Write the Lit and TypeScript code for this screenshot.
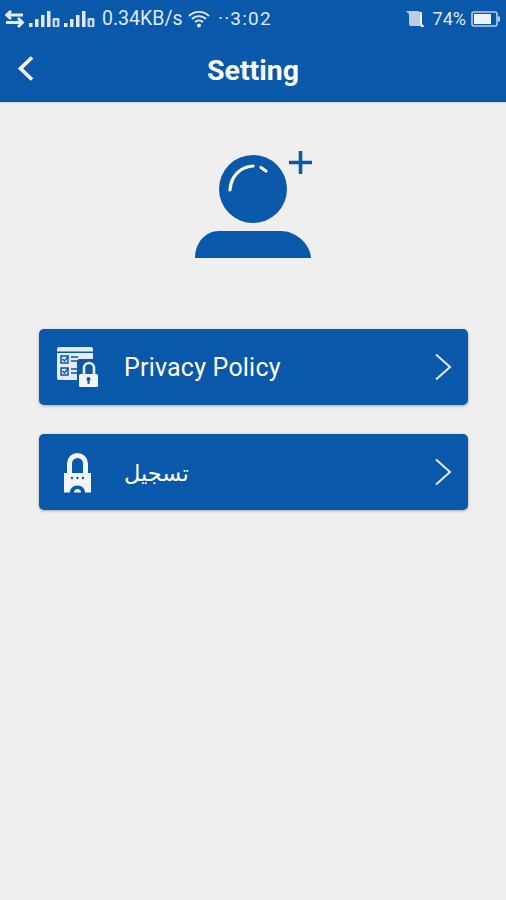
import { LitElement, html, css, svg } from 'lit';
import { customElement } from 'lit/decorators.js';

const signal = (sim: string) => svg`
  <rect x="0" y="13" width="3.500" height="4" fill="#dfe8f5"/>
  <rect x="6" y="9" width="3.500" height="8" fill="#dfe8f5"/>
  <rect x="12" y="5" width="3.500" height="12" fill="#dfe8f5"/>
  <rect x="18" y="1" width="3.500" height="16" fill="#dfe8f5"/>
  <rect x="23.500" y="8" width="7" height="9" rx="1" fill="#c5d5ea"/>
  <rect x="26" y="10.500" width="2" height="5" fill="#0a58aa"/>
  <title>${sim}</title>`;

@customElement('app-root')
export class AppRoot extends LitElement {
  static styles = css`
    :host {
      display: block;
      width: 506px;
      height: 900px;
      background: #efefef;
      font-family: Roboto, "Noto Sans", sans-serif;
      overflow: hidden;
    }
    .head {
      background: #0a58aa;
      height: 101px;
      border-bottom: 1px solid #094c94;
      box-shadow: 0 1px 1px #d5deea;
      color: #fff;
    }
    .status {
      height: 37px;
      display: flex;
      align-items: center;
      padding: 0 6px 0 5px;
      color: #dfe8f5;
      font-size: 18px;
      box-sizing: border-box;
    }
    .status svg { display: block; flex: none; }
    .speed { margin-left: 7px; width: 82px; white-space: nowrap; font-size: 19.500px; }
    .wifi { margin-left: 4px; }
    .dots { margin-left: 8px; font-size: 19px; letter-spacing: 1.200px; white-space: nowrap; }
    .spacer { flex: 1; }
    .pct { margin-left: 6px; font-size: 18px; }
    .batt { margin-left: 5px; }
    .bar {
      height: 64px;
      position: relative;
      display: flex;
      align-items: center;
      justify-content: center;
    }
    .title { font-size: 28.500px; font-weight: 700; margin-top: 2px; }
    .back { position: absolute; left: 17px; top: 18px; }
    .avatar { display: block; margin: 46px 0 0 190px; }
    .list {
      margin: 70px 38px 0 39px;
      display: flex;
      flex-direction: column;
      gap: 29px;
    }
    .row {
      height: 76px;
      background: #0a58aa;
      border-radius: 5px;
      box-shadow: 0 1px 3px rgba(0, 0, 0, 0.3);
      display: flex;
      align-items: center;
      color: #fff;
      font-size: 25px;
      letter-spacing: 0.2px;
    }
    .ico { width: 85px; flex: none; display: flex; padding-left: 16px; box-sizing: border-box; }
    .label { flex: 1; padding-top: 1px; }
    .ar { font-family: "DejaVu Sans", sans-serif; font-size: 22.500px; letter-spacing: 0; text-align: left; unicode-bidi: plaintext; }
    .chev { margin-right: 16px; display: block; }
  `;

  render() {
    return html`
      <div class="head">
        <div class="status">
          <svg width="20" height="18" viewBox="0 0 20 18">
            <path d="M6 1 1.500 5 6 9M2 5h16M13 8l4.500 4.500-4.500 4.500M18 12.500H1" fill="none" stroke="#e6edf7" stroke-width="2.800"/>
          </svg>
          <svg width="31" height="18" viewBox="0 0 31 18" style="margin-left:4px">${signal('1')}</svg>
          <svg width="31" height="18" viewBox="0 0 31 18" style="margin-left:4px">${signal('2')}</svg>
          <span class="speed">0.34KB/s</span>
          <svg class="wifi" width="22" height="18" viewBox="0 0 22 18">
            <path d="M1 6a14 14 0 0 1 20 0M4 9a10 10 0 0 1 14 0M7 12a6 6 0 0 1 8 0" fill="none" stroke="#dfe8f5" stroke-width="1.800"/>
            <circle cx="11" cy="15.500" r="2" fill="#dfe8f5"/>
          </svg>
          <span class="dots">··3:02</span>
          <span class="spacer"></span>
          <svg width="22" height="20" viewBox="0 0 22 20">
            <path d="M1 2h12l2 1v12l2 2H5l-1-2V5z" fill="#b9cde6"/>
            <path d="M15 3h2v12l2 2v1h-3l-1-3z" fill="#eef3fa"/>
          </svg>
          <span class="pct">74%</span>
          <svg class="batt" width="29" height="18" viewBox="0 0 29 18">
            <rect x="1" y="2" width="25" height="14" rx="2" fill="none" stroke="#b9cde6" stroke-width="1.600"/>
            <rect x="3" y="4" width="17" height="10" fill="#eef3fa"/>
            <rect x="27" y="6.500" width="2" height="5" fill="#b9cde6"/>
          </svg>
        </div>
        <div class="bar">
          <svg class="back" width="18" height="27" viewBox="0 0 18 27">
            <path d="M15 2.500 3.500 13.500 15 24.500" fill="none" stroke="#fff" stroke-width="3.600"/>
          </svg>
          <span class="title">Setting</span>
        </div>
      </div>

      <svg class="avatar" width="125" height="111" viewBox="0 0 125 111">
        <circle cx="63" cy="41" r="34" fill="#0a58aa"/>
        <path d="M40 42C41 28 50 19 63 18" fill="none" stroke="#fff" stroke-width="3.200" stroke-linecap="round"/>
        <path d="M71 19.500l5 3.500" fill="none" stroke="#fff" stroke-width="3.200" stroke-linecap="round"/>
        <path d="M5 110C5 95 15 83 29 83H91C105 83 120 95 121 110Z" fill="#0a58aa"/>
        <path d="M99 14.500H122M110.500 3V26" fill="none" stroke="#0a58aa" stroke-width="3.600"/>
      </svg>

      <div class="list">
        <div class="row">
          <div class="ico">
            <svg width="44" height="42" viewBox="0 0 44 42">
              <path d="M4 1h32a2 2 0 0 1 2 2v31H4a2 2 0 0 1-2-2V3a2 2 0 0 1 2-2z" fill="#e3ebf6"/>
              <rect x="2" y="5.500" width="36" height="1.500" fill="#0a58aa"/>
              <g fill="none" stroke="#0a58aa" stroke-width="1.500">
                <rect x="6" y="10" width="7" height="7"/>
                <rect x="6" y="22" width="7" height="7"/>
                <path d="M7.500 13l2 2 4-5M7.500 25l2 2 4-5M16 11h7M16 15h11M16 23h7M16 27h9"/>
              </g>
              <rect x="22" y="13" width="23" height="29" rx="3" fill="#0a58aa"/>
              <path d="M29 29v-7a5 5 0 0 1 10 0v7" fill="none" stroke="#e3ebf6" stroke-width="2.600"/>
              <rect x="24" y="28" width="19" height="13" rx="1.500" fill="#f2f5fa"/>
              <circle cx="33.500" cy="33" r="2" fill="#0a58aa"/>
              <rect x="32.500" y="34" width="2" height="4" fill="#0a58aa"/>
            </svg>
          </div>
          <span class="label">Privacy Policy</span>
          <svg class="chev" width="18" height="28" viewBox="0 0 18 28">
            <path d="M2 1.500 16 14 2 26.500" fill="none" stroke="#e3ebf6" stroke-width="2"/>
          </svg>
        </div>
        <div class="row">
          <div class="ico">
            <svg width="42" height="42" viewBox="0 0 42 42">
              <path d="M14.500 24V12.500a8 8 0 0 1 16 0V24" fill="none" stroke="#f2f5fa" stroke-width="5"/>
              <path d="M9 22h27v19.500h-6c0-4-3-7-7.500-7S15 37.500 15 41.500H9z" fill="#f2f5fa"/>
              <path d="M19 41.500c0-2 1.500-3.500 3.500-3.500s3.500 1.500 3.500 3.500z" fill="#f2f5fa"/>
              <circle cx="17" cy="27" r="1.200" fill="#0a58aa"/>
              <circle cx="22.500" cy="27" r="1.200" fill="#0a58aa"/>
              <circle cx="28" cy="27" r="1.200" fill="#0a58aa"/>
            </svg>
          </div>
          <span class="label ar" dir="rtl">تسجيل</span>
          <svg class="chev" width="18" height="28" viewBox="0 0 18 28">
            <path d="M2 1.500 16 14 2 26.500" fill="none" stroke="#e3ebf6" stroke-width="2"/>
          </svg>
        </div>
      </div>
    `;
  }
}
